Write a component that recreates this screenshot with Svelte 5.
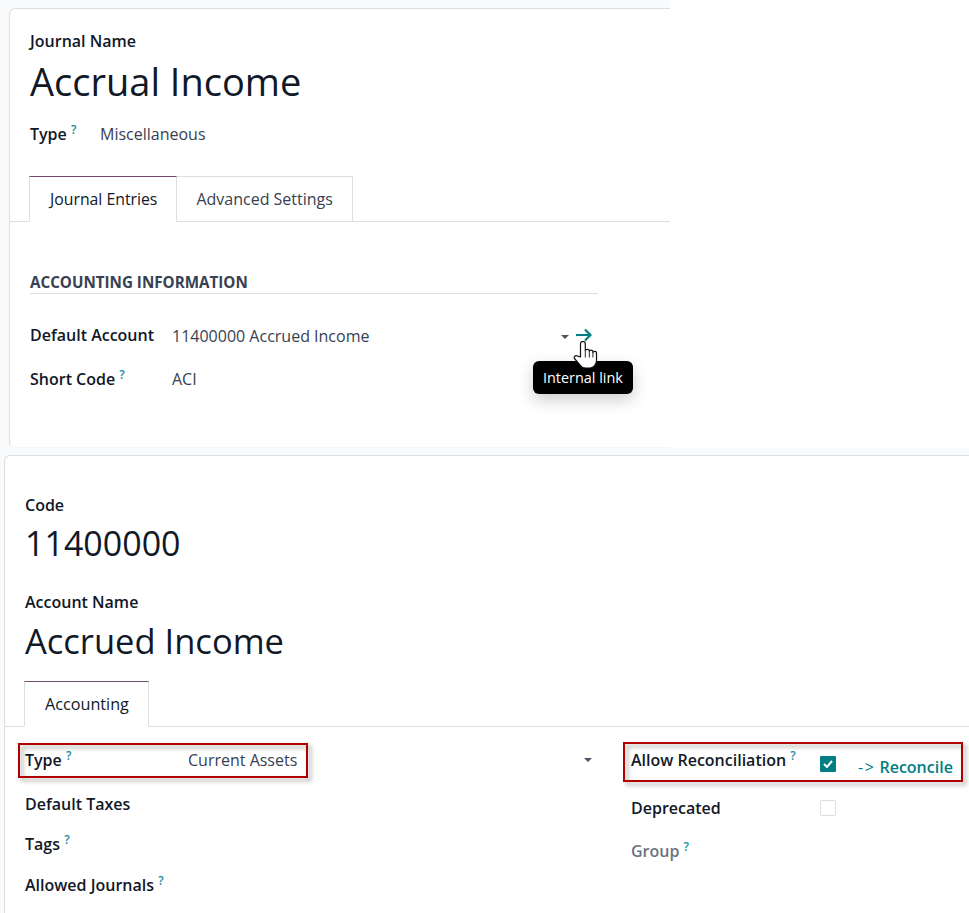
<script lang="ts">
  const firstTabs = ['Journal Entries', 'Advanced Settings'];
</script>

{#snippet help()}
  <sup class="help">?</sup>
{/snippet}

<div class="page">
  <section class="sheet journal">
    <p class="lbl">Journal Name</p>
    <h1>Accrual Income</h1>
    <div class="type-row">
      <span class="lbl">Type {@render help()}</span>
      <span class="val">Miscellaneous</span>
    </div>
    <div class="tabs">
      {#each firstTabs as t, i}
        <span class="tab" class:active={i === 0}>{t}</span>
      {/each}
    </div>
    <div class="group">
      <h2>ACCOUNTING INFORMATION</h2>
      <div class="row acct">
        <span class="lbl">Default Account</span>
        <span class="val grow">11400000 Accrued Income</span>
        <span class="caret"></span>
        <span class="link-wrap">
          <svg class="arrow" width="16" height="14" viewBox="0 0 16 14">
            <path d="M0 7h14M9 1.500l5.500 5.500L9 12.500" fill="none" stroke="#017e84" stroke-width="2.200" />
          </svg>
          <span class="tooltip">Internal link</span>
          <svg class="hand" width="25" height="28" viewBox="0 0 25 28">
            <path d="M7.500 16V2.800a2.400 2.400 0 0 1 4.800 0V9.500c0-1.500 4-1.500 4 0v.8c0-1.500 3.600-1.500 3.600 0v1.200c0-1.500 3.600-1.500 3.600 0V19.500c0 4-3 7.500-6.500 7.500H12.500c-3 0-4.500-1.500-6-3.500L1.500 17.500c-1-1.500 1-3.800 3-2.400z" fill="#fff" stroke="#111" stroke-width="1.200" stroke-linejoin="round" />
            <path d="M12.300 9.500v7M16.300 10.300v6.200M19.900 11.500v5" stroke="#111" stroke-width="0.900" fill="none" />
          </svg>
        </span>
      </div>
      <div class="row code">
        <span class="lbl">Short Code {@render help()}</span>
        <span class="val">ACI</span>
      </div>
    </div>
  </section>

  <section class="sheet account">
    <p class="lbl">Code</p>
    <div class="big code-num">11400000</div>
    <p class="lbl name">Account Name</p>
    <div class="big title">Accrued Income</div>
    <div class="tabs">
      <span class="tab active">Accounting</span>
    </div>
    <div class="cols">
      <div class="left">
        <div class="field first">
          <span class="lbl">Type {@render help()}</span>
          <span class="val">Current Assets</span>
          <span class="caret"></span>
          <span class="mark mark-type"></span>
        </div>
        <div class="field taxes"><span class="lbl">Default Taxes</span></div>
        <div class="field tags"><span class="lbl">Tags {@render help()}</span></div>
        <div class="field journals"><span class="lbl">Allowed Journals {@render help()}</span></div>
      </div>
      <div class="right">
        <div class="field first">
          <span class="lbl wide">Allow Reconciliation {@render help()}</span>
          <span class="box on">
            <svg width="10" height="8" viewBox="0 0 10 8"><path d="M1 4l3 3 5-6" fill="none" stroke="#fff" stroke-width="2" /></svg>
          </span>
          <span class="reconcile"><span class="thin">-&gt;</span> Reconcile</span>
          <span class="mark mark-rec"></span>
        </div>
        <div class="field dep">
          <span class="lbl wide">Deprecated</span>
          <span class="box"></span>
        </div>
        <div class="field grp">
          <span class="lbl wide muted">Group {@render help()}</span>
        </div>
      </div>
    </div>
  </section>
</div>

<style>
  :global(body) {
    margin: 0;
    background: #f9fafb;
    font-family: "Open Sans", "Noto Sans", sans-serif;
    color: #374151;
  }
  .page {
    width: 969px;
    height: 913px;
    overflow: hidden;
    position: relative;
    background: linear-gradient(#fff, #fff) 670px 0 / 299px 448px no-repeat, #f9fafb;
  }
  p { margin: 0; }
  .sheet {
    background: #fff;
    border: 1px solid #dcdee1;
    border-right: none;
    box-sizing: border-box;
  }
  .journal {
    margin: 8px 0 0 9px;
    width: 661px;
    height: 440px;
    border-bottom-color: #f4f5f6;
    border-radius: 6px 0 0 6px;
    padding: 20px 0 0 20px;
  }
  .account {
    margin: 7px 0 0 4px;
    width: 965px;
    height: 460px;
    border-bottom: none;
    border-radius: 6px 0 0 0;
    padding: 37px 0 0 20px;
  }
  .lbl {
    font-weight: 600;
    font-size: 16px;
    line-height: 24px;
    color: #111827;
    white-space: nowrap;
  }
  .val { font-size: 16px; line-height: 24px; color: #374151; white-space: nowrap; }
  h1 {
    margin: 2px 0 0;
    font-weight: 400;
    font-size: 38px;
    line-height: 52px;
    color: #111827;
  }
  .help {
    color: #1a8ca5;
    font-size: 12px;
    font-weight: 600;
    vertical-align: 6px;
    line-height: 0;
    margin-left: 0;
  }
  .type-row { display: flex; margin-top: 15px; }
  .type-row .lbl { width: 70px; }
  .tabs {
    display: flex;
    margin: 30px 0 0 -20px;
    padding-left: 19px;
    border-bottom: 1px solid #dcdee1;
  }
  .tab {
    padding: 10px 19px;
    font-size: 16px;
    line-height: 24px;
    border: 1px solid #dcdee1;
    border-left: none;
    margin-bottom: -1px;
    color: #374151;
  }
  .tab.active {
    padding-left: 20px;
    font-size: 15.800px;
    color: #111827;
    border-left: 1px solid #dcdee1;
    border-top-color: #714b67;
    border-bottom-color: #fff;
  }
  .account .tab.active { font-size: 16.200px; }
  .group { width: 568px; margin-top: 49px; }
  h2 {
    margin: 0;
    font-size: 15.200px;
    line-height: 22px;
    font-weight: 700;
    color: #374151;
    border-bottom: 1px solid #dcdee1;
  }
  .row { display: flex; align-items: center; }
  .row .lbl { width: 142px; }
  .acct { margin-top: 28px; position: relative; }
  .grow { flex: 1; margin-top: 2px; }
  .code { margin-top: 19px; }
  .caret {
    width: 0;
    height: 0;
    border: 4px solid transparent;
    border-top-color: #4b5563;
    border-bottom: none;
    margin-top: 3px;
  }
  .link-wrap { position: relative; width: 16px; height: 14px; margin: 0 6px 0 7px; }
  .arrow { display: block; }
  .hand { position: absolute; left: -3px; top: 13px; }
  .tooltip {
    position: absolute;
    left: -43px;
    top: 33px;
    background: #000;
    color: #fff;
    font-size: 14.400px;
    line-height: 21px;
    padding: 6px 10px;
    border-radius: 6px;
    white-space: nowrap;
    box-shadow: 0 6px 16px rgba(0, 0, 0, 0.2);
  }
  .big {
    line-height: 48px;
    color: #111827;
  }
  .code-num { font-size: 34px; margin-top: 2px; }
  .name { margin-top: 23px; }
  .title { font-size: 34.500px; margin-top: 3px; }
  .account .tabs { margin-top: 16px; }
  .cols { display: flex; margin-top: 21px; }
  .left { width: 606px; position: relative; }
  .right { flex: 1; }
  .field { display: flex; align-items: center; position: relative; height: 24px; }
  .left .field .lbl { width: 163px; }
  .left .first .caret { position: absolute; left: 559px; top: 10px; margin: 0; }
  .taxes { margin-top: 20px; }
  .tags { margin-top: 16px; }
  .journals { margin-top: 17px; }
  .wide { width: 189px; }
  .box {
    width: 16px;
    height: 16px;
    box-sizing: border-box;
    border: 1px solid #dcdee1;
    border-radius: 1px;
    display: flex;
    align-items: center;
    justify-content: center;
    background: #fff;
  }
  .box.on { background: #017e84; border-color: #017e84; margin-top: 8px; }
  .reconcile {
    color: #017e84;
    font-size: 16px;
    font-weight: 600;
    margin: 14px 0 0 22px;
    white-space: nowrap;
  }
  .thin { font-weight: 400; letter-spacing: 1.500px; }
  .dep { margin-top: 24px; }
  .grp { margin-top: 19px; }
  .lbl.muted { color: #6b7280; }
  .mark {
    position: absolute;
    border: 2px solid #b00000;
    box-sizing: border-box;
    filter: drop-shadow(3px 3px 2px rgba(80, 80, 70, 0.5));
    pointer-events: none;
  }
  .mark-type { left: -7px; top: -5px; width: 290px; height: 35px; }
  .mark-rec { left: -8px; top: -6px; width: 340px; height: 40px; }
</style>
